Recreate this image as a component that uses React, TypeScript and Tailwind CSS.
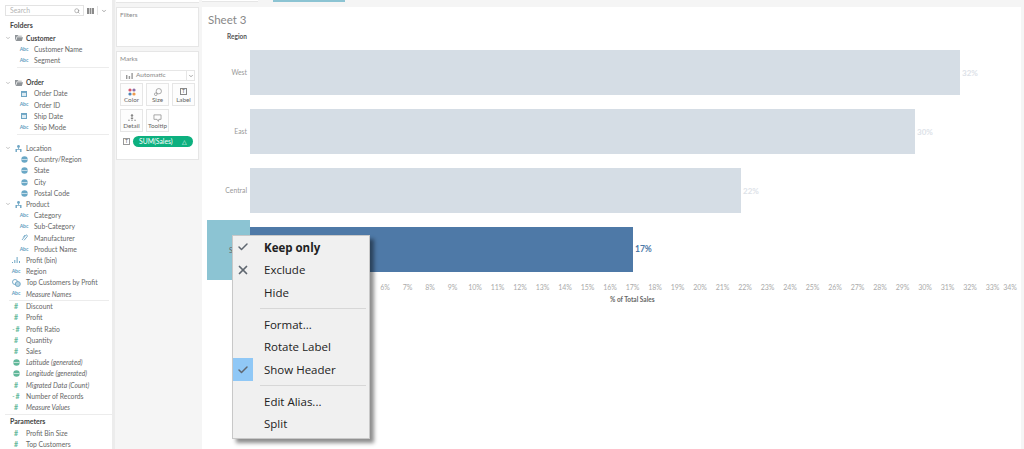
import React from "react";
import { Check, X, Search, ChevronDown } from "lucide-react";

type Kind = "abc" | "date" | "globe" | "hash" | "hashc" | "clip" | "bin" | "set" | "hier" | "mglobe";

const Icon = ({ kind }: { kind: Kind }) => {
  if (kind === "abc")
    return <span className="text-[5px] font-bold leading-none text-[#5b9bbd]">Abc</span>;
  if (kind === "hash" || kind === "hashc")
    return (
      <span className="flex items-center text-[7px] font-bold leading-none text-[#62b89a]">
        {kind === "hashc" && <span className="mr-px text-[6px]">-</span>}#
      </span>
    );
  if (kind === "date")
    return (
      <svg width="6" height="6" viewBox="0 0 6 6">
        <rect x="0.5" y="0.5" width="5" height="5" fill="#dcebf3" stroke="#6da5c4" />
        <rect x="0.5" y="0.5" width="5" height="1.4" fill="#6da5c4" />
      </svg>
    );
  if (kind === "globe" || kind === "mglobe") {
    const c = kind === "globe" ? "#6aa8c6" : "#62b89a";
    return (
      <svg width="7" height="7" viewBox="0 0 7 7">
        <circle cx="3.5" cy="3.5" r="3.2" fill={c} />
        <path d="M0.5 3.5h6" stroke="#fff" strokeWidth="0.6" />
      </svg>
    );
  }
  if (kind === "clip")
    return (
      <svg width="7" height="7" viewBox="0 0 7 7" fill="none" stroke="#6da5c4" strokeWidth="0.9">
        <path d="M1 6 4.6 1.4a1 1 0 0 1 1.6 1.2L3 6.4M2.2 3.4 4 1" />
      </svg>
    );
  if (kind === "bin")
    return (
      <svg width="8" height="6" viewBox="0 0 8 6" fill="#6da5c4">
        <rect x="0" y="5" width="1" height="1" />
        <rect x="2.3" y="3" width="1" height="3" />
        <rect x="4.6" y="0" width="1" height="6" />
        <rect x="7" y="4" width="1" height="2" />
      </svg>
    );
  if (kind === "set")
    return (
      <svg width="9" height="8" viewBox="0 0 9 8" fill="none" stroke="#6da5c4" strokeWidth="0.9">
        <circle cx="3" cy="3" r="2.5" />
        <circle cx="5.8" cy="5" r="2.5" fill="#b7d4e3" />
      </svg>
    );
  return (
    <svg width="7" height="7" viewBox="0 0 7 7" fill="#6da5c4">
      <circle cx="3.5" cy="1.5" r="1.4" />
      <path d="M3.1 2.8h.8V4h-.8zM0.5 4h6v.8h-6zM0.5 4.8h1.4V7H0.5zM5.1 4.8h1.4V7H5.1z" />
    </svg>
  );
};

const Folder = () => (
  <svg width="8" height="6" viewBox="0 0 8 6" fill="#8f9498">
    <path d="M0 0h2.6l.8.8h3.4v.8H1.8L0 6zM2.2 2.2H8L6.8 6H.9z" />
  </svg>
);

const Row = ({ kind, name, deep, italic }: { kind: Kind; name: string; deep?: boolean; italic?: boolean }) => (
  <div className={`flex h-[11.2px] items-center ${deep ? "pl-[19px]" : "pl-[11px]"}`}>
    <span className="flex w-[10px] shrink-0 items-center justify-center">
      <Icon kind={kind} />
    </span>
    <span className={`ml-[5px] whitespace-nowrap text-[6.8px] leading-none text-[#666] ${italic ? "italic" : ""}`}>{name}</span>
  </div>
);

const Group = ({ name, bold, folder }: { name: string; bold?: boolean; folder?: boolean }) => (
  <div className="flex h-[11.2px] items-center pl-[5px]">
    <ChevronDown size={6} className="mr-[2px] text-[#888]" />
    <span className="flex w-[11px] items-center justify-center">{folder ? <Folder /> : <Icon kind="hier" />}</span>
    <span className={`ml-[2px] text-[6.8px] leading-none ${bold ? "font-bold text-[#444]" : "text-[#666]"}`}>{name}</span>
  </div>
);

const Sidebar = () => (
  <aside className="h-[449px] w-[112px] shrink-0 overflow-hidden bg-white">
    <div className="flex items-center pl-[5px] pt-[5px]">
      <div className="flex h-[11px] w-[79px] items-center justify-between border border-[#e3e3e3] pl-[4px] pr-[3px]">
        <span className="text-[6.8px] leading-none text-[#b5b5b5]">Search</span>
        <Search size={6} className="text-[#777]" />
      </div>
      <svg width="7" height="6" viewBox="0 0 7 6" fill="#8a8a8a" className="ml-[3px]">
        <path d="M0 0h2v6H0zM2.6 0h1.8v6H2.6zM5 0h2v6H5z" />
      </svg>
      <span className="ml-[3px] mr-[3px] h-[9px] w-px bg-[#e3e3e3]" />
      <ChevronDown size={6} className="text-[#555]" />
    </div>
    <div className="mt-[3px] flex h-[13px] items-center pl-[10px] text-[7px] font-bold leading-none text-[#444]">Folders</div>
    <div className="h-[0.4px]" />
    <Group name="Customer" bold folder />
    <Row kind="abc" name="Customer Name" deep />
    <Row kind="abc" name="Segment" deep />
    <div className="ml-[17px] mr-[3px] mt-[1px] h-px bg-[#ececec]" />
    <div className="h-[9px]" />
    <Group name="Order" bold folder />
    <Row kind="date" name="Order Date" deep />
    <Row kind="abc" name="Order ID" deep />
    <Row kind="date" name="Ship Date" deep />
    <Row kind="abc" name="Ship Mode" deep />
    <div className="ml-[17px] mr-[3px] mt-[1px] h-px bg-[#ececec]" />
    <div className="h-[8px]" />
    <Group name="Location" />
    <Row kind="globe" name="Country/Region" deep />
    <Row kind="globe" name="State" deep />
    <Row kind="globe" name="City" deep />
    <Row kind="globe" name="Postal Code" deep />
    <Group name="Product" />
    <Row kind="abc" name="Category" deep />
    <Row kind="abc" name="Sub-Category" deep />
    <Row kind="clip" name="Manufacturer" deep />
    <Row kind="abc" name="Product Name" deep />
    <Row kind="bin" name="Profit (bin)" />
    <Row kind="abc" name="Region" />
    <Row kind="set" name="Top Customers by Profit" />
    <Row kind="abc" name="Measure Names" italic />
    <div className="ml-[9px] mr-[3px] mt-[0.6px] h-px bg-[#ececec]" />
    <Row kind="hash" name="Discount" />
    <Row kind="hash" name="Profit" />
    <Row kind="hashc" name="Profit Ratio" />
    <Row kind="hash" name="Quantity" />
    <Row kind="hash" name="Sales" />
    <Row kind="mglobe" name="Latitude (generated)" italic />
    <Row kind="mglobe" name="Longitude (generated)" italic />
    <Row kind="hash" name="Migrated Data (Count)" italic />
    <Row kind="hashc" name="Number of Records" />
    <Row kind="hash" name="Measure Values" italic />
    <div className="ml-[5px] mt-[1px] h-px bg-[#ececec]" />
    <div className="flex h-[13px] items-center pl-[10px] text-[7px] font-bold leading-none text-[#444]">Parameters</div>
    <Row kind="hash" name="Profit Bin Size" />
    <Row kind="hash" name="Top Customers" />
  </aside>
);

const MarkButton = ({ label, children }: { label: string; children: React.ReactNode }) => (
  <div className="flex h-[23px] w-[23px] flex-col items-center justify-between border border-[#e6e6e6] bg-[#fdfdfd] pb-[2px] pt-[3px]">
    <span className="flex h-[9px] items-center justify-center">{children}</span>
    <span className="whitespace-nowrap text-[6.3px] leading-none text-[#666]">{label}</span>
  </div>
);

const MiddleColumn = () => (
  <div className="flex w-[90px] shrink-0 flex-col gap-[4px] border-l-[3px] border-[#ececec] bg-[#f5f5f5] pl-[1px] pr-[2px]">
    <div className="h-[3px] w-[83px] border-b border-[#e6e6e6] bg-white" />
    <section className="h-[40px] w-[83px] border border-[#e6e6e6] bg-white pl-[3px] pt-[3px] text-[6.5px] leading-[8px] text-[#888]">
      Filters
    </section>
    <section className="h-[109px] w-[83px] border border-[#e6e6e6] bg-white px-[3px] pt-[3px]">
      <div className="text-[6.5px] leading-[8px] text-[#888]">Marks</div>
      <div className="mt-[7px] flex h-[11px] w-[75px] items-center border border-[#e6e6e6] pl-[5px]">
        <svg width="7" height="6" viewBox="0 0 7 6" fill="#999">
          <path d="M0 2h1.4v4H0zM2.7 3h1.4v3H2.7zM5.4 0h1.4v6H5.4z" />
        </svg>
        <span className="ml-[3px] flex-1 text-[6.5px] leading-none text-[#888]">Automatic</span>
        <span className="flex h-full w-[8px] items-center justify-center border-l border-[#e6e6e6]">
          <ChevronDown size={6} className="text-[#555]" />
        </span>
      </div>
      <div className="mt-[2px] flex gap-[3px]">
        <MarkButton label="Color">
          <svg width="8" height="8" viewBox="0 0 8 8">
            <circle cx="2" cy="2" r="1.6" fill="#d9546a" />
            <circle cx="6" cy="2" r="1.6" fill="#8a6fa8" />
            <circle cx="2" cy="6" r="1.6" fill="#4f86b8" />
            <circle cx="6" cy="6" r="1.6" fill="#ee9a4d" />
          </svg>
        </MarkButton>
        <MarkButton label="Size">
          <svg width="8" height="8" viewBox="0 0 9 9" fill="none" stroke="#888" strokeWidth="0.8">
            <circle cx="5.4" cy="3.6" r="3" />
            <circle cx="2" cy="7" r="1.5" />
          </svg>
        </MarkButton>
        <MarkButton label="Label">
          <span className="flex h-[7px] w-[7px] items-center justify-center border border-[#888] text-[5px] leading-none text-[#666]">T</span>
        </MarkButton>
      </div>
      <div className="mt-[3px] flex gap-[3px]">
        <MarkButton label="Detail">
          <svg width="8" height="7" viewBox="0 0 9 8" fill="#888">
            <circle cx="4.5" cy="1.8" r="1.4" />
            <rect x="3.2" y="4" width="2.6" height="1.8" />
            <rect x="0" y="6.6" width="2" height="1" />
            <rect x="3.5" y="6.6" width="2" height="1" />
            <rect x="7" y="6.6" width="2" height="1" />
          </svg>
        </MarkButton>
        <MarkButton label="Tooltip">
          <svg width="9" height="8" viewBox="0 0 9 9" fill="none" stroke="#888" strokeWidth="0.8">
            <path d="M0.5 1h8v5H6L5.5 8.3 4 6H0.5z" />
          </svg>
        </MarkButton>
      </div>
      <div className="mt-[4px] flex items-center pl-[3px]">
        <span className="flex h-[7px] w-[7px] items-center justify-center border border-[#999] text-[5px] leading-none text-[#666]">T</span>
        <div className="ml-[3px] flex h-[11px] w-[60px] items-center justify-between rounded-full bg-[#0db07f] pl-[6px] pr-[6px] text-[6.8px] leading-none text-white">
          <span>SUM(Sales)</span>
          <span className="text-[6px]">△</span>
        </div>
      </div>
    </section>
  </div>
);

const bars = [
  { name: "West", width: 710, pct: "32%", gap: "mt-[9px]" },
  { name: "East", width: 665, pct: "30%", gap: "mt-[14px]" },
  { name: "Central", width: 491, pct: "22%", gap: "mt-[14px]" },
];

// 1% - 5% sit under the context menu
const ticks = Array.from({ length: 29 }, (_, i) => i + 6);

const Chart = () => (
  <div className="mr-[3px] flex h-[449px] flex-1 flex-col">
    <div className="flex h-[7px] items-start">
      <div className="h-[2px] w-[56px] border-b border-[#e6e6e6] bg-white" />
      <div className="ml-[15px] h-[2px] w-[72px] bg-[#8cc4d3]" />
    </div>
    <main className="flex-1 bg-white pl-[5px]">
      <h1 className="ml-[1px] pt-[6px] text-[11.5px] leading-[14px] text-[#888]">Sheet 3</h1>
      <div className="mt-[6px] w-[40px] text-right text-[6.5px] font-bold leading-[8px] text-[#555]">Region</div>
      <div className="flex flex-col">
        {bars.map((b) => (
          <div key={b.name} className={`flex h-[45px] items-center ${b.gap}`}>
            <span className="w-[40px] shrink-0 text-right text-[6.8px] leading-none text-[#999]">{b.name}</span>
            <span className="ml-[3px] h-full bg-[#d5dde5]" style={{ width: b.width }} />
            <span className="ml-[2px] text-[8px] font-bold leading-none text-[#dde2e8]">{b.pct}</span>
          </div>
        ))}
        <div className="relative mt-[7px] flex h-[60px] items-start">
          <span className="h-full w-[43px] shrink-0 bg-[#8cc4d3] pl-[22px] pt-[27px] text-[6.8px] leading-none text-[#666]">South</span>
          <span className="mt-[7px] h-[45px] w-[383px] bg-[#4e79a7]" />
          <span className="ml-[2px] mt-[25px] text-[8.5px] font-bold leading-none text-[#4e79a7]">17%</span>
          <ContextMenu />
        </div>
        <div className="relative ml-[43px] mt-[4px] h-[7px]">
          {ticks.map((n) => (
            <span
              key={n}
              className="absolute top-0 -translate-x-1/2 text-[7px] leading-none text-[#aaa]"
              style={{ left: n === 34 ? 760 : n * 22.5 }}
            >
              {n}%
            </span>
          ))}
        </div>
        <div className="ml-[403px] mt-[6px] text-[6.5px] font-bold leading-none text-[#666]">% of Total Sales</div>
      </div>
    </main>
  </div>
);

const MenuItem = ({ label, bold, mark, active }: { label: string; bold?: boolean; mark?: "check" | "x"; active?: boolean }) => (
  <div className="flex h-[22.7px] items-center">
    <span className={`flex h-full w-[20px] items-center justify-center ${active ? "bg-[#90c8f6]" : ""}`}>
      {mark === "check" && <Check size={12} strokeWidth={3} className="text-[#5f6770]" />}
      {mark === "x" && <X size={14} strokeWidth={3} className="text-[#5f6770]" />}
    </span>
    <span className={`ml-[11px] font-['Open_Sans',sans-serif] text-[11.5px] leading-none text-[#222] ${bold ? "font-bold" : ""}`}>{label}</span>
  </div>
);

const ContextMenu = () => (
  <div className="absolute left-[25px] top-[15px] z-10 h-[204px] w-[138px] border border-[#c8c8c8] bg-[#f0f0f0] shadow-[4px_4px_4px_rgba(0,0,0,0.45)]">
    <MenuItem label="Keep only" bold mark="check" />
    <MenuItem label="Exclude" mark="x" />
    <MenuItem label="Hide" />
    <div className="my-[4px] ml-[27px] mr-[3px] h-[1px] bg-[#d7d7d7]" />
    <MenuItem label="Format..." />
    <MenuItem label="Rotate Label" />
    <MenuItem label="Show Header" mark="check" active />
    <div className="my-[4px] ml-[27px] mr-[3px] h-[1px] bg-[#d7d7d7]" />
    <MenuItem label="Edit Alias..." />
    <MenuItem label="Split" />
  </div>
);

export default function App() {
  return (
    <div className="flex h-[449px] w-[1024px] overflow-hidden bg-[#f5f5f5] font-['Lato','Open_Sans',sans-serif]">
      <Sidebar />
      <MiddleColumn />
      <Chart />
    </div>
  );
}
